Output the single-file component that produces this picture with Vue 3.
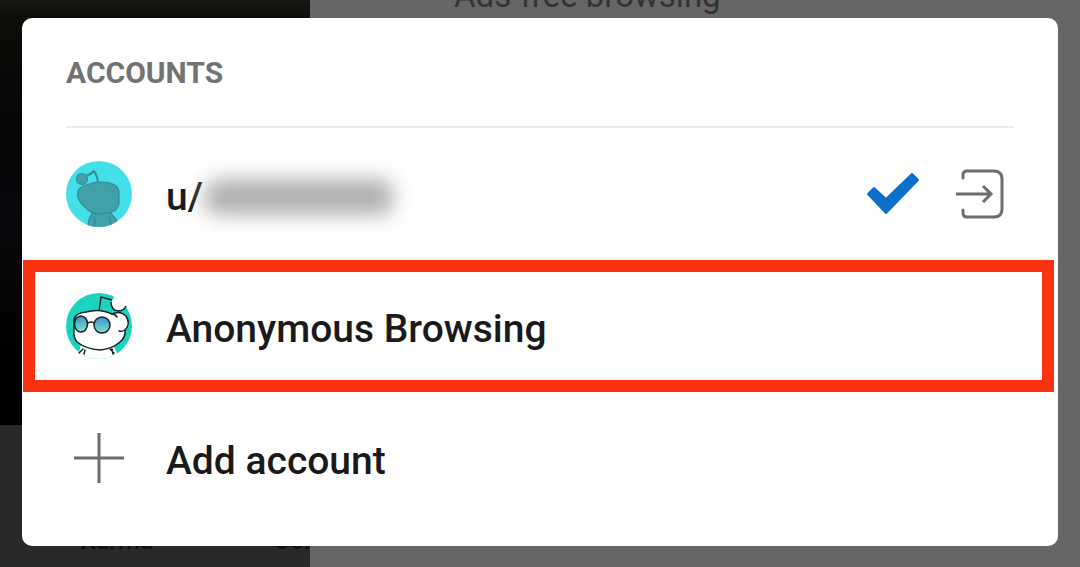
<script setup>
import { ref } from 'vue'

const accounts = ref([
  { id: 'user', prefix: 'u/', current: true },
  { id: 'anonymous', name: 'Anonymous Browsing', highlighted: true },
])
</script>

<template>
  <div class="screen">
    <aside class="drawer" aria-hidden="true">
      <div class="banner"></div>
      <div class="stats"><span>Karma</span><span>Coins</span></div>
    </aside>
    <main class="page" aria-hidden="true">
      <p class="promo">Ads-free browsing</p>
    </main>

    <section class="dialog" role="dialog" aria-labelledby="accounts-title">
      <h1 id="accounts-title" class="title">ACCOUNTS</h1>
      <ul class="list">
        <li
          v-for="account in accounts"
          :key="account.id"
          class="row"
          :class="{ highlighted: account.highlighted }"
        >
          <button type="button" class="choice">
            <svg v-if="account.id === 'user'" class="avatar" viewBox="0 0 66 66" aria-hidden="true">
              <defs>
                <clipPath id="disc-user"><circle cx="33" cy="33" r="33" /></clipPath>
              </defs>
              <g clip-path="url(#disc-user)">
                <rect width="66" height="66" fill="#43e0ea" />
                <g fill="#41a0a9" stroke="#2f8b95" stroke-width="1.2" stroke-linejoin="round">
                  <path d="M26 49 Q27 52 24 56 Q22 60 22 68 H51 Q52 58 47 55 Q44 52 45 48Z" />
                  <path d="M29 56 L28 67 M43 56 L46 67" fill="none" />
                  <path d="M12 30 Q13 26 20 24 Q27 21 35 21 Q45 21 50 25 Q53 27 53 33 L53 42 Q52 49 46 51 Q39 53 32 53 Q24 52 20 47 Q14 42 12 37 Q11 33 12 30Z" />
                  <path d="M21 14 Q24 14 28 10 Q31 14 32 21" fill="none" stroke-width="2" />
                  <circle cx="16" cy="18" r="5.5" />
                </g>
              </g>
            </svg>
            <svg v-else class="avatar" viewBox="0 0 66 66" aria-hidden="true">
              <defs>
                <clipPath id="disc-anon"><circle cx="33" cy="33" r="33" /></clipPath>
                <linearGradient id="lens" x1="0" y1="0" x2="0" y2="1">
                  <stop offset="0" stop-color="#3e8fd0" />
                  <stop offset="1" stop-color="#79e9c4" />
                </linearGradient>
              </defs>
              <g clip-path="url(#disc-anon)">
                <rect width="66" height="66" fill="#1cd3bd" />
                <path d="M15 52 L11 66 H54 L47 52Z" fill="#fff" />
              </g>
              <g fill="#fff" stroke="#17232a" stroke-width="1.5" stroke-linecap="round" stroke-linejoin="round">
                <path d="M33 19 L35 4 L46 7" fill="none" />
                <path d="M8 27 Q9 20 20 19 Q34 15 46 21 Q54 17 60 23 Q65 31 59 37 Q60 44 54 49 Q46 56 34 57 Q20 56 11 49 Q7 44 8 37Z" />
                <path d="M46 21 Q49 21 51 24 M59 37 Q56 39 53 38 M22 30 Q25 28 28 30" fill="none" />
                <ellipse cx="15" cy="31" rx="6.5" ry="8" fill="url(#lens)" />
                <circle cx="36" cy="32" r="8" fill="url(#lens)" />
                <path d="M17 56 L13 60 M19 57 L18 61 M44 56 L48 60 M46 56 L47 61" fill="none" />
              </g>
              <circle cx="53" cy="10" r="7.5" fill="#fff" />
              <path d="M45 9 Q45 17 52 18 Q58 18 60 13" fill="none" stroke="#17232a" stroke-width="1.5" />
            </svg>
            <span v-if="account.name">{{ account.name }}</span>
            <span v-else class="user">{{ account.prefix }}<i class="redacted"></i></span>
          </button>
          <template v-if="account.current">
            <svg class="check" viewBox="0 0 54 44" role="img" aria-label="Current account">
              <path d="M2 22 L8 16 L20 27 L46 2 L52 8 L20 41Z" fill="#0b6fcb" stroke="#0b6fcb" stroke-width="2" stroke-linejoin="round" />
            </svg>
            <button type="button" class="logout" aria-label="Log out">
              <svg viewBox="0 0 50 52" aria-hidden="true">
                <g fill="none" stroke="#6d6d6d" stroke-width="3">
                  <path d="M7 10 V7 Q7 3 11 3 H38 Q46 3 46 11 V41 Q46 49 38 49 H11 Q7 49 7 45 V42" stroke-linecap="round" />
                  <path d="M0 26 H34 M27 18 L35 26 L27 34" />
                </g>
              </svg>
            </button>
          </template>
        </li>
        <li class="row">
          <button type="button" class="choice">
            <svg class="avatar" viewBox="0 0 66 66" aria-hidden="true">
              <path d="M33 8 V58 M8 33 H58" fill="none" stroke="#6d6d6d" stroke-width="3" />
            </svg>
            <span>Add account</span>
          </button>
        </li>
      </ul>
    </section>
  </div>
</template>

<style>
body {
  margin: 0;
}
</style>

<style scoped>
.screen {
  position: relative;
  display: grid;
  grid-template-columns: 310px 1fr;
  box-sizing: border-box;
  min-height: 100vh;
  overflow: hidden;
  background: #666;
  font-family: Roboto, "Liberation Sans", sans-serif;
}

.drawer {
  display: flex;
  flex-direction: column;
  overflow: hidden;
  background: #292929;
}

.banner {
  height: 425px;
  background: linear-gradient(#161712 0, #0c0c09 18px, #050505 150px, #08080d 210px, #070503 280px, #000 360px);
}

.stats {
  display: flex;
  gap: 120px;
  padding: 100px 0 0 80px;
  color: #101010;
  font-size: 25px;
  font-weight: 500;
  line-height: 32px;
}

.page {
  height: 0;
}

.promo {
  margin: -24px 0 0 144px;
  color: #333;
  font-size: 33px;
  line-height: 40px;
  white-space: nowrap;
}

.dialog {
  position: absolute;
  inset: 18px 22px auto;
  box-sizing: border-box;
  padding-bottom: 22px;
  border-radius: 10px;
  background: #fff;
}

.title {
  margin: 0 44px;
  padding: 35px 0 33px;
  border-bottom: 2px solid #ebebeb;
  color: #737373;
  font-size: 30px;
  font-weight: 700;
  line-height: 40px;
}

.list {
  margin: 0;
  padding: 0;
  list-style: none;
}

.row {
  display: flex;
  align-items: center;
  box-sizing: border-box;
  height: 132px;
  padding: 0 52px 0 44px;
}

.row.highlighted {
  margin: 0 4px 0 1px;
  padding: 0 38px 0 31px;
  border: 12px solid #f9330f;
}

.choice {
  display: flex;
  flex: 1;
  gap: 34px;
  align-items: center;
  padding: 0;
  border: 0;
  background: none;
  color: #1a1a1b;
  font: 500 39px/48px Roboto, "Liberation Sans", sans-serif;
  text-align: left;
  cursor: pointer;
}

.choice > span {
  padding-top: 6px;
}

.avatar {
  flex: none;
  width: 66px;
  height: 66px;
  overflow: visible;
}

.user {
  display: flex;
  align-items: center;
}

.redacted {
  width: 190px;
  height: 36px;
  border-radius: 20px 12px 12px 16px;
  background: #b0b0b0;
  filter: blur(10px);
}

.check {
  width: 54px;
  height: 44px;
  margin-right: 36px;
}

.logout {
  display: flex;
  padding: 0;
  border: 0;
  background: none;
  cursor: pointer;
}

.logout svg {
  width: 50px;
  height: 52px;
}
</style>
